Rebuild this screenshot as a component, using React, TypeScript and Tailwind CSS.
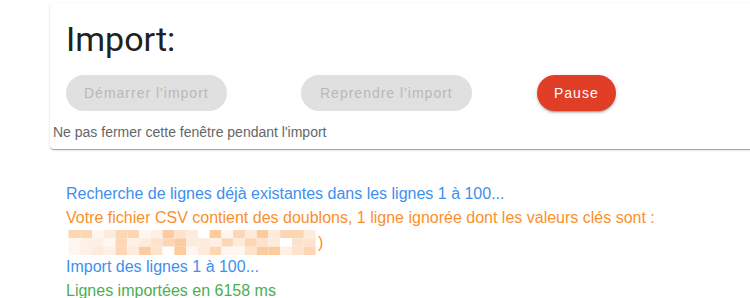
import { useMemo } from "react";

const mosaicColors = ["#fef6ef", "#fdebdc", "#fde3cc", "#fdd6b5", "#fccb9f", "#ffffff", "#fef0e4"];

function buildMosaic() {
  const cells: { x: number; y: number; fill: string }[] = [];
  let seed = 7;
  for (let row = 0; row < 3; row++) {
    for (let col = 0; col < 21; col++) {
      seed = (seed * 9301 + 49297) % 233280;
      const pick = Math.floor((seed / 233280) * mosaicColors.length);
      cells.push({ x: col * 12, y: row * 8.5, fill: mosaicColors[pick] });
    }
  }
  return cells;
}

function RedactedBlock() {
  const cells = useMemo(buildMosaic, []);
  return (
    <svg aria-hidden="true" className="h-[25px] w-[252px]" viewBox="0 0 252 25.5">
      {cells.map((cell, i) => (
        <rect fill={cell.fill} height="8.5" key={i} width="12" x={cell.x} y={cell.y} />
      ))}
    </svg>
  );
}

export default function App() {
  return (
    <main className="min-h-screen bg-white pl-[50px] pt-[3px] font-['Liberation_Sans',Arial,sans-serif]">
      <section className="w-[720px] rounded-[4px] bg-white shadow-[0_2px_1px_-1px_rgba(0,0,0,0.2),0_1px_1px_0_rgba(0,0,0,0.14),0_1px_3px_0_rgba(0,0,0,0.12)]">
        <h1 className="px-4 pt-[15px] font-['Roboto',sans-serif] text-[34px] leading-[42px] text-[#212121]">
          Import:
        </h1>
        <div className="mt-[15px] flex pl-4">
          <div className="w-[235px]">
            <button
              className="h-9 rounded-full bg-[#e0e0e0] px-[18px] text-[14px] tracking-[1px] text-[#b8b8b8]"
              disabled
              type="button"
            >
              Démarrer l'import
            </button>
          </div>
          <div className="w-[236px]">
            <button
              className="h-9 rounded-full bg-[#e0e0e0] px-[19px] text-[14px] tracking-[1px] text-[#b8b8b8]"
              disabled
              type="button"
            >
              Reprendre l'import
            </button>
          </div>
          <div>
            <button
              className="h-9 rounded-full bg-[#e03e27] px-[17px] text-[14px] tracking-[1px] text-white shadow-[0_3px_1px_-2px_rgba(0,0,0,0.2),0_2px_2px_0_rgba(0,0,0,0.14),0_1px_5px_0_rgba(0,0,0,0.12)]"
              type="button"
            >
              Pause
            </button>
          </div>
        </div>
        <p className="mt-[13px] pb-[9px] pl-[3px] text-[14px] leading-[16px] text-[#666666]">
          Ne pas fermer cette fenêtre pendant l'import
        </p>
      </section>
      <div className="mt-[33px] pl-4 text-[16px] leading-[24px]">
        <p className="text-[#3d8ff0]">Recherche de lignes déjà existantes dans les lignes 1 à 100...</p>
        <p className="text-[#fb8f2b]">
          Votre fichier CSV contient des doublons, 1 ligne ignorée dont les valeurs clés sont :
        </p>
        <p className="flex items-center text-[#fb8f2b]">
          <RedactedBlock />
          <span>)</span>
        </p>
        <p className="text-[#3d8ff0]">Import des lignes 1 à 100...</p>
        <p className="text-[#4caf50]">Lignes importées en 6158 ms</p>
      </div>
    </main>
  );
}
